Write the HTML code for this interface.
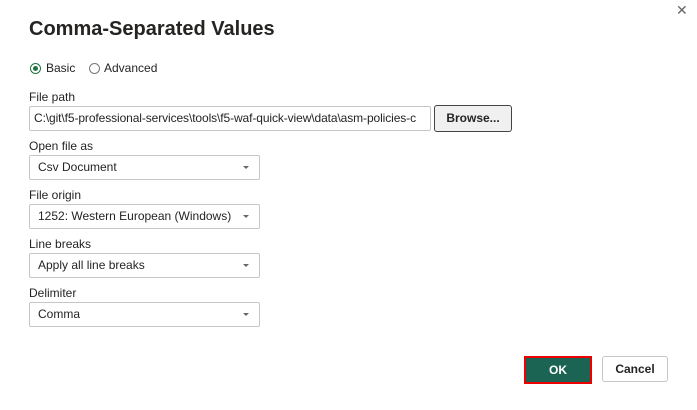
<!DOCTYPE html><html><head><style>
body{margin:0;width:697px;height:410px;background:#fff;font-family:"Liberation Sans",sans-serif;color:#252423;position:relative;overflow:hidden}
.a{position:absolute}
.lbl{font-size:12px;color:#252423}
.sel{position:absolute;left:29px;width:231px;height:25px;border:1px solid #c8c6c4;border-radius:2px;box-sizing:border-box;font-size:12px;line-height:23px;padding-left:8px}
.sel:after{content:"";position:absolute;right:10px;top:10px;border-left:3px solid transparent;border-right:3px solid transparent;border-top:3px solid #666}
</style></head><body>
<div class="a" style="left:676px;top:2px;font-size:14px;color:#666">✕</div>
<div class="a" style="left:29px;top:18px;font-size:20px;font-weight:bold;color:#252423">Comma-Separated Values</div>
<div class="a" style="left:30px;top:63px;width:11px;height:11px;border:1px solid #217346;border-radius:50%;box-sizing:border-box"><div style="margin:2px;width:5px;height:5px;border-radius:50%;background:#217346"></div></div>
<div class="a lbl" style="left:46px;top:61px">Basic</div>
<div class="a" style="left:89px;top:63px;width:11px;height:11px;border:1px solid #777;border-radius:50%;box-sizing:border-box"></div>
<div class="a lbl" style="left:104px;top:61px">Advanced</div>
<div class="a lbl" style="left:29px;top:90px">File path</div>
<div class="a" style="left:29px;top:106px;width:402px;height:25px;border:1px solid #c8c6c4;border-radius:2px;box-sizing:border-box;font-size:12px;line-height:23px;padding-left:4px;overflow:hidden;white-space:nowrap;letter-spacing:-0.1px">C:\git\f5-professional-services\tools\f5-waf-quick-view\data\asm-policies-c</div>
<div class="a" style="left:434px;top:105px;width:78px;height:27px;border:1px solid #444;border-radius:3px;box-sizing:border-box;background:#f0f0f0;font-size:12px;font-weight:bold;text-align:center;line-height:25px">Browse...</div>
<div class="a lbl" style="left:29px;top:139px">Open file as</div>
<div class="sel" style="top:155px">Csv Document</div>
<div class="a lbl" style="left:29px;top:188px">File origin</div>
<div class="sel" style="top:204px">1252: Western European (Windows)</div>
<div class="a lbl" style="left:29px;top:237px">Line breaks</div>
<div class="sel" style="top:253px">Apply all line breaks</div>
<div class="a lbl" style="left:29px;top:286px">Delimiter</div>
<div class="sel" style="top:302px">Comma</div>
<div class="a" style="left:524px;top:356px;width:68px;height:28px;border:2px solid #e00;box-sizing:border-box;background:#1b6454;color:#fff;font-size:12px;font-weight:bold;text-align:center;line-height:24px">OK</div>
<div class="a" style="left:602px;top:356px;width:66px;height:26px;border:1px solid #c8c6c4;border-radius:3px;box-sizing:border-box;font-size:12px;font-weight:bold;text-align:center;line-height:24px">Cancel</div>
</body></html>
